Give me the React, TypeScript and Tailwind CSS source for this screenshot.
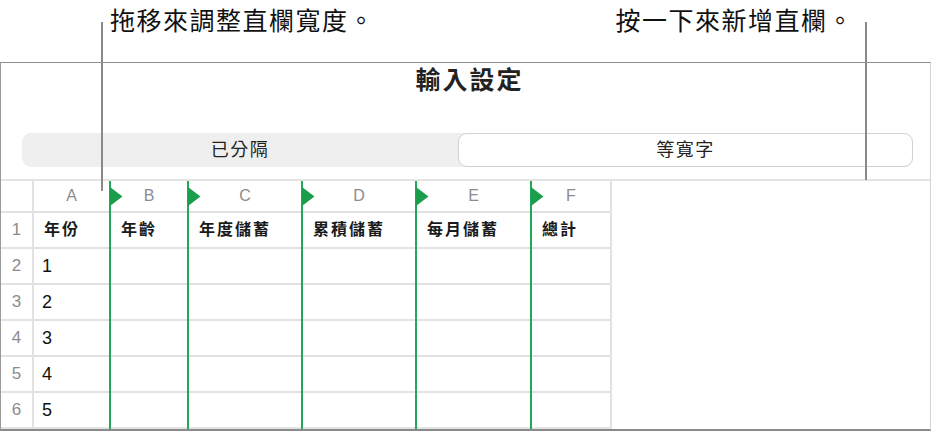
const cols = [
  { key: "A", w: "w-[75px]", head: "年份", green: false },
  { key: "B", w: "w-[78px]", head: "年齡", green: true },
  { key: "C", w: "w-[114px]", head: "年度儲蓄", green: true },
  { key: "D", w: "w-[114px]", head: "累積儲蓄", green: true },
  { key: "E", w: "w-[115px]", head: "每月儲蓄", green: true },
  { key: "F", w: "w-[82px]", head: "總計", green: true },
];

const years = ["1", "2", "3", "4", "5"];

function Handle() {
  return (
    <svg
      className="absolute left-[-1px] top-[6px]"
      width="13"
      height="19"
      viewBox="0 0 13 19"
    >
      <polygon points="0,0 12.5,9.5 0,19" fill="#1b9e4b" />
    </svg>
  );
}

export default function App() {
  return (
    <div className="relative h-[431px] w-[931px] overflow-hidden bg-white font-['Liberation_Sans','Noto_Sans_CJK_TC',sans-serif] text-[#111]">
      {/* callouts */}
      <div className="flex h-[62px] justify-between pl-[110px] pr-[77px] pt-[4px] text-[25px] leading-[34px] tracking-[1.5px]">
        <span>拖移來調整直欄寬度。</span>
        <span>按一下來新增直欄。</span>
      </div>

      <div className="flex h-[369px] flex-col border-b-2 border-l border-r border-t border-b-[#8a8a8a] border-l-[#9a9a9a] border-r-[#d4d4d4] border-t-[#8e8e8e]">
        {/* settings */}
        <div className="flex h-[118px] shrink-0 flex-col border-b-2 border-[#e4e4e4]">
          <div className="pl-[8px] text-center text-[25px] font-semibold leading-[34px] tracking-[2px] text-[#222]">
            輸入設定
          </div>
          <div className="ml-[21px] mr-[17px] mt-[36px] flex h-[34px] rounded-[9px] bg-[#efefef] text-[18px] tracking-[1.5px] text-[#222]">
            <div className="flex w-[436px] items-center justify-center">已分隔</div>
            <div className="flex flex-1 items-center justify-center rounded-[9px] border border-[#d2d2d2] bg-white">
              等寬字
            </div>
          </div>
        </div>

        {/* grid */}
        <div className="flex flex-1 overflow-hidden">
          <div className="w-[33px] shrink-0 border-r-2 border-[#e2e2e2] text-[17px] text-[#8c8c8c]">
            <div className="h-[32px] border-b-2 border-[#e2e2e2]" />
            {[1, 2, 3, 4, 5, 6].map((n) => (
              <div
                key={n}
                className="flex h-[36px] items-center justify-center border-b-2 border-[#e2e2e2]"
              >
                {n}
              </div>
            ))}
          </div>

          {cols.map((c, i) => (
            <div
              key={c.key}
              className={`${c.w} shrink-0 ${c.green ? "border-l-2 border-l-[#23a55a]" : ""} ${
                i === cols.length - 1 ? "border-r-2 border-r-[#e2e2e2]" : ""
              }`}
            >
              <div className="relative flex h-[32px] items-center justify-center border-b-2 border-[#e2e2e2] text-[16px] text-[#8c8c8c]">
                {c.green ? <Handle /> : null}
                {c.key}
              </div>
              <div className="flex h-[36px] items-center border-b-2 border-[#e2e2e2] pl-[10px] text-[16px] font-bold tracking-[2px] text-[#1a1a1a]">
                {c.head}
              </div>
              {years.map((y) => (
                <div
                  key={y}
                  className="flex h-[36px] items-center border-b-2 border-[#e2e2e2] pl-[8px] text-[18px] text-[#111]"
                >
                  {c.key === "A" ? y : ""}
                </div>
              ))}
            </div>
          ))}
        </div>
      </div>

      {/* leader lines */}
      <div className="absolute left-[101px] top-[22px] h-[169px] w-[2px] bg-[#8a8a8a]" />
      <div className="absolute left-[865px] top-[22px] h-[158px] w-[2px] bg-[#8a8a8a]" />
    </div>
  );
}
